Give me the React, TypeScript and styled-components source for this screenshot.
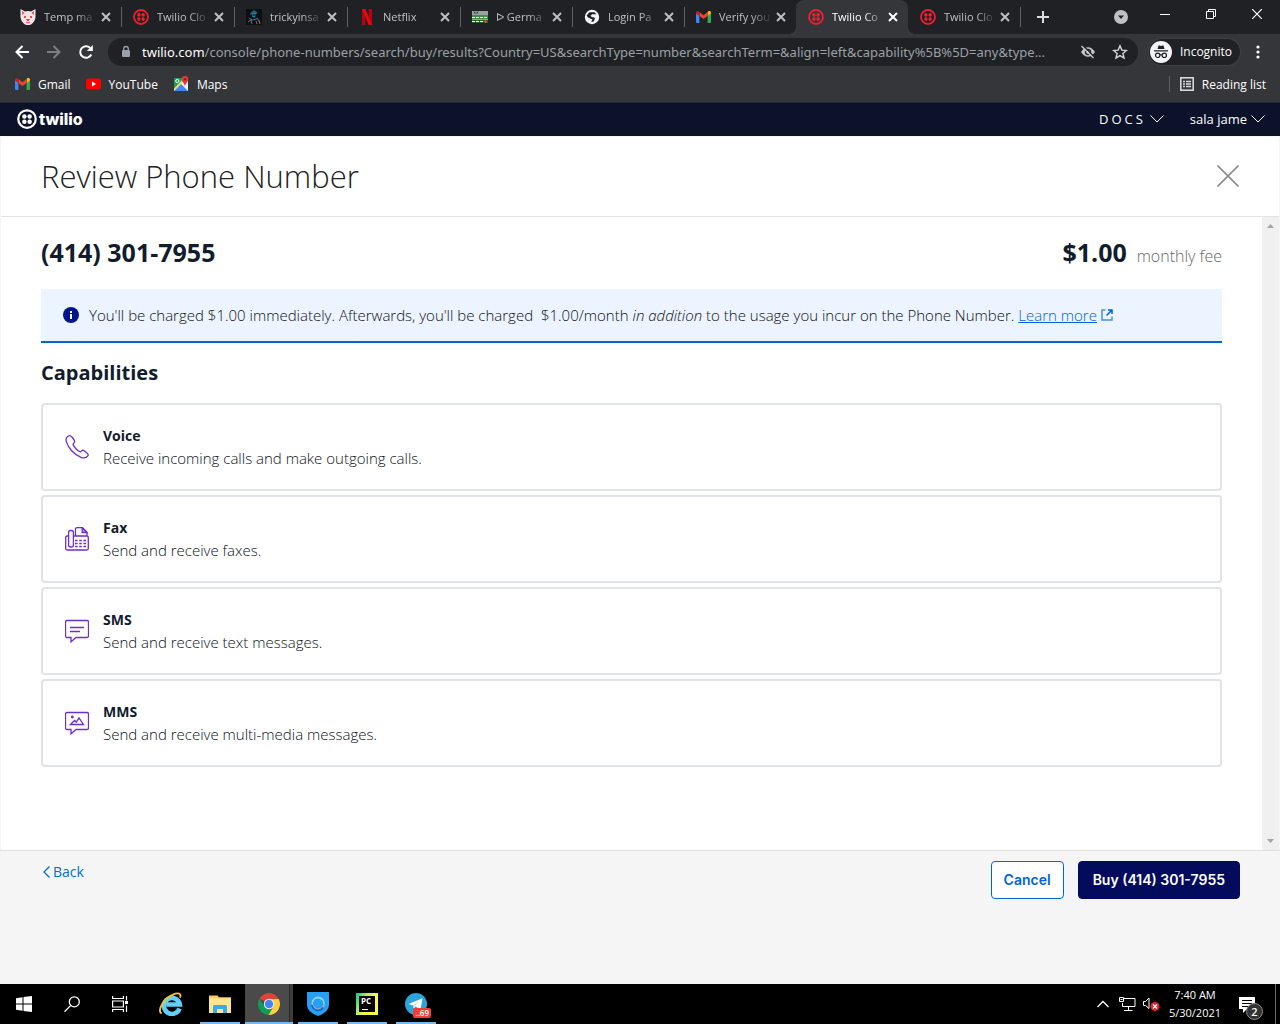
import React from "react";
import styled, { createGlobalStyle, css } from "styled-components";

const chromeFont = '"Open Sans", "Noto Sans", sans-serif';
const urlFont = '"Noto Sans", "Open Sans", sans-serif';

const GlobalStyle = createGlobalStyle`
  *, *::before, *::after { box-sizing: border-box; }
  body { margin: 0; font-family: "Open Sans", "Noto Sans", sans-serif; background: #f5f5f5; }
  button { font: inherit; border: 0; padding: 0; background: none; color: inherit; cursor: pointer; }
  h1, h2, h3, p { margin: 0; }
  svg { display: block; flex: none; }
  a { text-decoration: none; color: inherit; }
`;

/* ---------- frame ---------- */

const Screen = styled.div`
  display: flex;
  flex-direction: column;
  min-height: 100vh;
`;

const Chrome = styled.header`
  font-family: ${chromeFont};
  font-size: 12px;
  background: #35363a;
  color: #fff;
  border-bottom: 1px solid #29292d;
`;

const TabStrip = styled.div`
  display: flex;
  align-items: stretch;
  height: 34px;
  padding-left: 8px;
  background: #202124;
`;

const Tabs = styled.div`
  display: grid;
  grid-template-columns: repeat(4, 113px) repeat(5, 112px);
`;

const Tab = styled.div<{ $active?: boolean; $divider?: boolean }>`
  position: relative;
  display: flex;
  align-items: center;
  padding: 0 10px 0 12px;
  color: #bdc1c6;
  font-size: 11px;
  line-height: 16px;
  ${(p) =>
    p.$divider &&
    css`
      &::after {
        content: "";
        position: absolute;
        right: -1px;
        top: 7px;
        width: 1px;
        height: 20px;
        background: #5f6368;
      }
    `}
  ${(p) =>
    p.$active &&
    css`
      color: #fff;
      background: #35363a;
      border-radius: 8px 8px 0 0;
      &::before,
      &::after {
        content: "";
        position: absolute;
        bottom: 0;
        width: 8px;
        height: 8px;
      }
      &::before {
        left: -8px;
        background: radial-gradient(circle at 0 0, transparent 8px, #35363a 8px);
      }
      &::after {
        right: -8px;
        background: radial-gradient(circle at 100% 0, transparent 8px, #35363a 8px);
      }
    `}
`;

const TabTitle = styled.span`
  flex: 1;
  min-width: 0;
  margin: 0 3px 0 8px;
  white-space: nowrap;
  mask-image: linear-gradient(to right, #000 32px, transparent 53px);
`;

const IconButton = styled.button<{ $w?: number; $h?: number; $color?: string }>`
  display: flex;
  flex: none;
  align-items: center;
  justify-content: center;
  width: ${(p) => p.$w ?? 16}px;
  height: ${(p) => p.$h ?? 16}px;
  color: ${(p) => p.$color ?? "inherit"};
`;

const WindowControls = styled.div`
  display: flex;
  margin-left: auto;
`;

const NewTab = styled.div`
  display: flex;
  align-items: center;
  padding-left: 9px;
`;

const AddressRow = styled.div`
  display: flex;
  align-items: center;
  height: 35px;
  padding: 0 4px 0 6px;
`;

const Omnibox = styled.div`
  display: flex;
  flex: 1;
  align-items: center;
  min-width: 0;
  height: 28px;
  margin: 0 11px 0 6px;
  padding: 0 10px 0 12px;
  border-radius: 14px;
  background: #202124;
  font-family: ${urlFont};
  font-size: 13px;
`;

const HostLabel = styled.label`
  margin-left: 10px;
`;

const UrlInput = styled.input`
  flex: 1;
  min-width: 0;
  padding: 0;
  border: 0;
  outline: 0;
  background: none;
  color: #9aa0a6;
  font: inherit;
`;

const Incognito = styled.button`
  display: flex;
  align-items: center;
  gap: 8px;
  height: 26px;
  padding: 0 8px 0 1px;
  border-radius: 13px;
  background: #202124;
  box-shadow: 0 0 0 1px #3f4043;
`;

const Bookmarks = styled.nav`
  display: flex;
  align-items: center;
  gap: 15px;
  height: 30px;
  margin-bottom: 3px;
  padding: 0 14px 0 15px;
`;

const Bookmark = styled.a`
  display: flex;
  align-items: center;
  gap: 8px;
`;

const ReadingList = styled.button`
  display: flex;
  align-items: center;
  gap: 8px;
  height: 16px;
  margin-left: auto;
  padding-left: 10px;
  border-left: 1px solid #5f6368;
`;

/* ---------- twilio page ---------- */

const SiteHeader = styled.div`
  display: flex;
  align-items: center;
  height: 33px;
  padding: 0 15px 2px 17px;
  background: #0d122b;
  color: #fff;
  font-size: 13px;
`;

const Logo = styled.a`
  display: flex;
  align-items: center;
  gap: 2px;
  margin-right: auto;
  font: 800 16px/20px Inter, sans-serif;
`;

const MenuButton = styled.button<{ $spaced?: boolean }>`
  display: flex;
  align-items: center;
  gap: 4px;
  margin-left: 26px;
  letter-spacing: ${(p) => (p.$spaced ? "3px" : "normal")};
`;

const Dialog = styled.main`
  display: flex;
  flex: 1;
  flex-direction: column;
  border: solid #f5f5f5;
  border-width: 1px 1px 0;
  background: #fff;
  color: #121c2d;
`;

const DialogHeader = styled.div`
  display: flex;
  align-items: center;
  justify-content: space-between;
  height: 80px;
  padding: 0 40px 1px;
  border-bottom: 1px solid #e4e4e4;
`;

const Title = styled.h1`
  color: #222;
  font-size: 31px;
  font-weight: 300;
  line-height: 40px;
`;

const DialogBody = styled.div`
  display: flex;
  flex: 1;
`;

const Content = styled.div`
  flex: 1;
  min-width: 0;
  padding: 19px 40px;
`;

const ScrollTrack = styled.div`
  display: flex;
  flex-direction: column;
  align-items: center;
  justify-content: space-between;
  width: 17px;
  padding: 7px 0;
  background: #f0f0f0;
`;

const NumberRow = styled.div`
  display: flex;
  align-items: baseline;
  justify-content: space-between;
  height: 33px;
  margin-bottom: 20px;
  line-height: 32px;
`;

const Strong = styled.strong`
  font-size: 25px;
  font-weight: 700;
`;

const Fee = styled.span`
  margin-left: 10px;
  color: #666;
  font-size: 16px;
  font-weight: 300;
`;

const Notice = styled.div`
  display: flex;
  align-items: center;
  gap: 10px;
  min-height: 54px;
  padding: 0 22px;
  border-bottom: 2px solid #0263e0;
  background: #ebf4ff;
  color: #111;
  font-size: 15px;
  font-weight: 300;
`;

const LearnMore = styled.a`
  display: inline-flex;
  align-items: center;
  gap: 4px;
  color: #0263e0;
  span { text-decoration: underline; }
`;

const SectionTitle = styled.h2`
  margin: 16px 0;
  font-size: 20px;
  font-weight: 700;
  line-height: 28px;
`;

const CardList = styled.div`
  display: grid;
  gap: 4px;
`;

const Card = styled.article`
  display: flex;
  align-items: center;
  gap: 14px;
  height: 88px;
  padding: 0 22px;
  border: 2px solid #e1e3ea;
  border-radius: 4px;
  line-height: 22px;
`;

const CardTitle = styled.h3`
  font-size: 14px;
  font-weight: 700;
`;

const CardText = styled.p`
  color: #0b1220;
  font-size: 15px;
  font-weight: 300;
`;

const DialogFooter = styled.footer`
  display: flex;
  align-items: flex-start;
  min-height: 134px;
  margin: 0 -1px;
  padding: 10px 40px;
  border-top: 1px solid #e0e0e0;
  background: #f5f5f5;
  font-size: 14px;
`;

const Back = styled.button`
  display: flex;
  align-items: center;
  gap: 3px;
  margin-right: auto;
  padding-left: 3px;
  color: #0070cc;
  line-height: 22px;
`;

const ActionButton = styled.button<{ $primary?: boolean }>`
  height: 38px;
  margin-left: 14px;
  padding: 0 ${(p) => (p.$primary ? 14 : 12)}px;
  border: 1px solid ${(p) => (p.$primary ? "#030b5d" : "#0263e0")};
  border-radius: 4px;
  background: ${(p) => (p.$primary ? "#030b5d" : "#fff")};
  color: ${(p) => (p.$primary ? "#fff" : "#0263e0")};
  font: 600 14px/20px Inter, sans-serif;
`;

/* ---------- taskbar ---------- */

const Taskbar = styled.div`
  display: flex;
  height: 40px;
  background: #000;
  color: #fff;
  font-family: ${chromeFont};
  font-size: 12px;
`;

const TaskApps = styled.div`
  display: flex;
  gap: 1px;
  margin-left: 3px;
`;

const TaskButton = styled.button<{ $running?: boolean; $active?: boolean }>`
  display: flex;
  align-items: center;
  justify-content: center;
  width: 48px;
  height: 40px;
  ${(p) =>
    p.$running &&
    css`
      background: linear-gradient(#76b9ed, #76b9ed) bottom / 40px 2px no-repeat;
    `}
  ${(p) =>
    p.$active &&
    css`
      background: linear-gradient(#76b9ed, #76b9ed) bottom / 48px 2px no-repeat,
        linear-gradient(to right, #4a4a4a 44px, #262626 44px, #262626 45px, #3c3c3c 45px);
    `}
`;

const Tray = styled.div`
  display: flex;
  align-items: center;
  margin-left: auto;
`;

const Clock = styled.time`
  width: 64px;
  margin-right: 4px;
  text-align: center;
  font-size: 11px;
  line-height: 18px;
`;

const ShowDesktop = styled.button`
  width: 5px;
  height: 40px;
  margin-left: 12px;
  border-left: 1px solid #6b6b6b;
`;

/* ---------- drawings ---------- */

const TwilioIcon = ({ size = 16, color = "#f01f2c" }: { size?: number; color?: string }) => (
  <svg width={size} height={size} viewBox="0 0 16 16" aria-hidden="true">
    <circle cx="8" cy="8" r="7" fill="none" stroke={color} strokeWidth="1.8" />
    <g fill={color}>
      <circle cx="5.9" cy="5.9" r="1.8" />
      <circle cx="10.1" cy="5.9" r="1.8" />
      <circle cx="5.9" cy="10.1" r="1.8" />
      <circle cx="10.1" cy="10.1" r="1.8" />
    </g>
  </svg>
);

const CatIcon = () => (
  <svg width="16" height="16" viewBox="0 0 16 16" aria-hidden="true">
    <path d="M.5 0 L5 2.500 Q8 1.500 11 2.500 L15.500 0 L15.500 8 Q15 13 11 15.500 Q8 16.500 5 15.500 Q1 13 .5 8Z" fill="#f7e4e4" />
    <path d="M2 2 L4.500 4 L2.200 6ZM14 2 L11.500 4 L13.800 6Z" fill="#e2545c" />
    <circle cx="5" cy="8" r="1" fill="#c4232f" />
    <circle cx="11" cy="8" r="1" fill="#c4232f" />
    <path d="M6.500 10.500h3L8 12zM6 13q2 1.500 4 0" stroke="#e2343f" strokeWidth=".9" fill="none" />
  </svg>
);

const PortraitIcon = () => (
  <svg width="16" height="16" viewBox="0 0 16 16" aria-hidden="true">
    <path fill="#0c1014" d="M0 0h16v16H0z" />
    <path d="M5 3 L8 1 L11 3 L10 5 L6 5Z" fill="#1e5f78" />
    <path d="M6 5h4v3l-2 1-2-1z" fill="#173f50" />
    <path d="M4 5l7-1M6 7l3 1M3 9l3 2 5-1M2 13l4-3M11 9l3 5" stroke="#2b8ba1" strokeWidth="1" />
    <path d="M5 11l1 4M13 11l1 4M10 12l1 3" stroke="#a3633a" strokeWidth="1" />
  </svg>
);

const NetflixIcon = () => (
  <svg width="16" height="16" viewBox="0 0 16 16" aria-hidden="true">
    <path d="M3 0h3.400v16H3zM9.700 0H13v16H9.700z" fill="#b1060f" />
    <path d="M3 0h3.400L13 16H9.700z" fill="#e50914" />
  </svg>
);

const RoadIcon = () => (
  <svg width="16" height="12" viewBox="0 0 16 12" aria-hidden="true">
    <path fill="#9da19d" d="M0 0h16v12H0z" />
    <path fill="#3f8f46" d="M0 4h16v4H0z" />
    <path fill="#2c5a34" d="M0 9h16v3H0z" />
    <path d="M0 6.500h16M0 10.500h16" stroke="#fff" strokeDasharray="3 1" />
    <path d="M2 .5l1 2 1-1 1 1 1-2" stroke="#243b6b" fill="none" />
    <path d="M12 10.500h3M13.500 9v3" stroke="#f04b21" />
  </svg>
);

const GlobeIcon = () => (
  <svg width="16" height="16" viewBox="0 0 16 16" aria-hidden="true">
    <circle cx="8" cy="8" r="7.200" fill="#f1f3f4" />
    <path d="M5.500 3.200H10.500L12.500 5.200H8.200L6.500 6.800 8 8.200H10L11 9.600 9.500 12.800H7.200L8.500 10.600 4 8.600 2.600 6.500Z" fill="#202124" />
  </svg>
);

const GmailIcon = () => (
  <svg width="15" height="12" viewBox="0 0 15 12" aria-hidden="true">
    <path d="M0 2v9a1 1 0 0 0 1 1h2.400V4.500z" fill="#4285f4" />
    <path d="M15 2v9a1 1 0 0 1-1 1h-2.400V4.500z" fill="#34a853" />
    <path d="M11.600 1.300V5L15 2.600V1.800C15 .2 13.200-.4 12 .6z" fill="#fbbc04" />
    <path d="M3.400 5V1.100L7.500 4.200l4.100-3.100V5L7.500 8z" fill="#ea4335" />
    <path d="M0 1.800v.8L3.400 5V1.100L2.800.6C1.700-.3 0 .2 0 1.800z" fill="#c5221f" />
  </svg>
);

const YouTubeIcon = () => (
  <svg width="15" height="12" viewBox="0 0 15 12" aria-hidden="true">
    <rect y=".5" width="15" height="11" rx="2.500" fill="#f00" />
    <path d="M6 3.500v5L10 6z" fill="#fff" />
  </svg>
);

const MapsIcon = () => (
  <svg width="16" height="16" viewBox="0 0 16 16" aria-hidden="true">
    <path d="M1 2h14v13H1z" fill="#e8eaed" />
    <path d="M1 2h10L1 13z" fill="#1e9b57" />
    <path d="M1 15L8 8l7 7z" fill="#4285f4" />
    <path d="M1 12.500L11.500 2h2L1 14.500z" fill="#fdd835" />
    <path d="M9 8l6 6V8z" fill="#f1f3f4" />
    <circle cx="4.300" cy="5" r="1.600" fill="none" stroke="#fff" strokeWidth="1" />
    <path d="M12 0a3.300 3.300 0 0 1 3.300 3.300C15.300 6 12.500 7 12 10.500 11.500 7 8.700 6 8.700 3.300A3.300 3.300 0 0 1 12 0z" fill="#e53935" />
    <circle cx="12" cy="3.300" r="1.200" fill="#8e1b1b" />
  </svg>
);

type StrokeProps = { w: number; h: number; d: string; width?: number };
const Stroke = ({ w, h, d, width = 1 }: StrokeProps) => (
  <svg width={w} height={h} viewBox={`0 0 ${w} ${h}`} fill="none" stroke="currentColor" strokeWidth={width} aria-hidden="true">
    <path d={d} />
  </svg>
);

const ReloadIcon = () => (
  <svg width="16" height="16" viewBox="0 0 16 16" aria-hidden="true">
    <path d="M13.300 10.500A5.800 5.800 0 1 1 12.200 4" fill="none" stroke="#fff" strokeWidth="2" />
    <path d="M14.800 1v6H8.800z" fill="#fff" />
  </svg>
);

const LockIcon = () => (
  <svg width="12" height="14" viewBox="0 0 12 14" aria-hidden="true">
    <rect x="2" y="5" width="8" height="7" rx="1" fill="#9aa0a6" />
    <path d="M3.700 5.500V3.800a2.300 2.300 0 0 1 4.600 0v1.700" fill="none" stroke="#9aa0a6" strokeWidth="1.300" />
  </svg>
);

const EyeOffIcon = () => (
  <svg width="16" height="16" viewBox="0 0 16 16" aria-hidden="true">
    <path d="M1 8Q4 3.200 8 3.200T15 8Q12 12.800 8 12.800T1 8Z" fill="#c4c7ca" />
    <circle cx="8" cy="8" r="3.200" fill="#202124" />
    <circle cx="8" cy="8" r="1.900" fill="#c4c7ca" />
    <path d="M2.500 1L15 13.500" stroke="#202124" strokeWidth="1.500" />
    <path d="M1.500 2L13.500 14" stroke="#c4c7ca" strokeWidth="1.500" />
  </svg>
);

const StarIcon = () => (
  <svg width="16" height="16" viewBox="0 0 16 16" aria-hidden="true">
    <path d="M8 1.800l1.800 4.300 4.600.4-3.500 3 1.100 4.500L8 11.600 4 14l1.100-4.500-3.500-3 4.600-.4z" fill="none" stroke="#d5d7da" strokeWidth="1.400" />
  </svg>
);

const SpyIcon = () => (
  <svg width="22" height="22" viewBox="0 0 22 22" aria-hidden="true">
    <circle cx="11" cy="11" r="11" fill="#f1f3f4" />
    <path d="M7.500 8l1-3.500h1.200L11 5l1.300-.5h1.200l1 3.500zM4 9.200h14v1.300H4z" fill="#202124" />
    <g fill="none" stroke="#202124" strokeWidth="1.200">
      <circle cx="7.700" cy="14.300" r="2.200" />
      <circle cx="14.300" cy="14.300" r="2.200" />
      <path d="M9.900 14q1.100-.8 2.200 0" />
    </g>
  </svg>
);

const ListIcon = () => (
  <svg width="14" height="14" viewBox="0 0 14 14" aria-hidden="true">
    <rect x=".8" y=".8" width="12.400" height="12.400" fill="none" stroke="#d5d7da" strokeWidth="1.600" />
    <path d="M3 4.500h2M6 4.500h5M3 7h2M6 7h5M3 9.500h2M6 9.500h5" stroke="#d5d7da" strokeWidth="1.500" />
  </svg>
);

const InfoIcon = () => (
  <svg width="16" height="16" viewBox="0 0 16 16" aria-hidden="true">
    <circle cx="8" cy="8" r="8" fill="#001489" />
    <path d="M7 4h2v2H7zM7 7h2v5H7z" fill="#fff" />
  </svg>
);

const purple = "#6d2ed1";

const PhoneIcon = () => (
  <svg width="24" height="24" viewBox="0 0 24 24" aria-hidden="true">
    <path d="M3 1.300C1.300 2.400.7 4.600 1.300 6.600 3.200 13 9.500 20 16 22.300c2.600.9 5.500.5 6.800-1.500.6-1 .3-2-.6-2.600l-3-2.400c-.9-.7-2-.7-2.700.1l-1.200 1c-2.800-1-6.500-5-7.300-7.600L9.100 7.600c.7-.8.7-1.700.1-2.600L6.900 2C6 .800 4.200.500 3 1.300z" fill="none" stroke={purple} strokeWidth="1.300" />
  </svg>
);

const FaxIcon = () => (
  <svg width="24" height="24" viewBox="0 0 24 24" fill="none" stroke={purple} strokeWidth="1.300" aria-hidden="true">
    <path d="M3 9H2Q.7 9 .7 10.500v11Q.7 23 2.200 23h19.600q1.500 0 1.500-1.500v-11q0-1.500-1.500-1.500H9" />
    <rect x="3.600" y="3.500" width="4.800" height="16.500" rx="2" />
    <path d="M10.500 9V2Q10.500.7 12 .7h5.500L22 5.200V9" />
    <path d="M17.200.9V5.500h4.600z" fill={purple} fillOpacity=".35" />
    <path d="M10 13.500h11.500M10 16.500h11.500M10 19.500h11.500" strokeWidth="1.600" strokeDasharray="2.600 1.600" />
  </svg>
);

const bubble = "M2 1.500h20q1.500 0 1.500 1.500v14q0 1.500-1.500 1.500H11l-5 4.300v-4.300H2Q.5 18.500.5 17V3Q.5 1.500 2 1.500z";

const SmsIcon = () => (
  <svg width="24" height="24" viewBox="0 0 24 24" fill="none" stroke={purple} strokeWidth="1.300" aria-hidden="true">
    <path d={bubble} />
    <path d="M5 8.500h14M5 12.500h10" />
  </svg>
);

const MmsIcon = () => (
  <svg width="24" height="24" viewBox="0 0 24 24" fill="none" stroke={purple} strokeWidth="1.300" aria-hidden="true">
    <path d={bubble} />
    <path d="M5.500 13.500L9.500 9.500l1.800 1.700L14 7l4.500 6.500z" />
    <circle cx="7.300" cy="6" r=".8" fill={purple} />
  </svg>
);

const ExternalIcon = () => (
  <svg width="12" height="12" viewBox="0 0 12 12" fill="none" stroke="#4a90ea" strokeWidth="1.500" aria-hidden="true">
    <path d="M4.500 1H1v10h10V7.500" />
    <path d="M7 1h4v4M11 1L5.500 6.500" stroke="#0263e0" />
  </svg>
);

const WindowsIcon = () => (
  <svg width="16" height="16" viewBox="0 0 16 16" fill="#fff" aria-hidden="true">
    <path d="M0 2.200L6.500 1.300V7.500H0zM7.500 1.100L16 0v7.500H7.500zM0 8.500h6.500v6.200L0 13.800zM7.500 8.500H16V16l-8.500-1.100z" />
  </svg>
);

const TaskViewIcon = () => (
  <svg width="18" height="16" viewBox="0 0 18 16" fill="none" stroke="#fff" strokeWidth="1.200" aria-hidden="true">
    <path d="M1.600 0v2.500h10.800V0M1.600 16v-2.500h10.800V16M1.600 5h10.800v6H1.600zM15.500 0v4.500M15.500 9.500V16" />
    <path d="M14 5h3v3h-3z" fill="#fff" stroke="none" />
  </svg>
);

const IeIcon = () => (
  <svg width="24" height="24" viewBox="0 0 24 24" fill="none" aria-hidden="true">
    <path d="M20.500 16.500A8 8 0 1 1 20.800 12.500H7.500" stroke="#5fd0f8" strokeWidth="4.600" />
    <path d="M2.600 21.500C-2.500 18.500 5 6.500 14 2.600 19 .3 22.700 1.200 21 5.600" stroke="#f6c32c" strokeWidth="1.900" />
  </svg>
);

const FolderIcon = () => (
  <svg width="22" height="20" viewBox="0 0 22 20" aria-hidden="true">
    <path d="M0 1.500h8.500L10 3.300h12V19H0z" fill="#f5cf62" />
    <path d="M1.500 4.500H22V19H0V5z" fill="#ffe590" />
    <path d="M4 19v-6.500q0-1.500 1.500-1.500h11q1.500 0 1.500 1.500V19h-4v-4H8v4z" fill="#37ace4" />
  </svg>
);

const ChromeIcon = () => (
  <svg width="24" height="24" viewBox="0 0 24 24" aria-hidden="true">
    <path d="M12 12L2.500 6.500A11 11 0 0 1 21.500 6.500L22 7H12z" fill="#db4437" />
    <path d="M12 12l4.500 2.500L11.500 23A11 11 0 0 1 2.500 6.500L7.500 14.500z" fill="#0f9d58" />
    <path d="M12 7h9.800A11 11 0 0 1 11.500 23L16.500 14.500z" fill="#ffcd40" />
    <circle cx="12" cy="12" r="5.200" fill="#f1f1f1" />
    <circle cx="12" cy="12" r="4.200" fill="#4285f4" />
  </svg>
);

const ShieldIcon = () => (
  <svg width="22" height="24" viewBox="0 0 22 24" aria-hidden="true">
    <path d="M0 0H22V13q0 7-11 11Q0 20 0 13z" fill="#279ff5" />
    <path d="M16 7.500A6 6 0 1 0 17 13" fill="none" stroke="#c9b3b8" strokeWidth="1.300" />
    <path d="M5.500 9.500A6 6 0 0 1 17 12.500" fill="none" stroke="#7fdcf8" strokeWidth="1.600" />
    <path d="M5 13a6 6 0 0 0 11 2.500" fill="none" stroke="#1267c8" strokeWidth="1.800" />
  </svg>
);

const PycharmBox = styled.span`
  display: flex;
  width: 22px;
  height: 22px;
  padding: 3px;
  background: linear-gradient(120deg, #21d789 10%, #b7ee5a 35%, #fcf84a 60%);
`;

const PycharmFace = styled.span`
  width: 16px;
  height: 16px;
  padding-left: 2px;
  background: linear-gradient(#fff, #fff) 3px 13px / 6px 1px no-repeat, #000;
  font-size: 8px;
  font-weight: 700;
  line-height: 10px;
  text-align: left;
`;

const Badged = styled.span`
  position: relative;
  display: block;
`;

const RedBadge = styled.span`
  position: absolute;
  right: -4px;
  bottom: -3px;
  padding: 0 2px;
  border-radius: 2px;
  background: #f23c34;
  font-size: 8px;
  font-weight: 600;
  line-height: 10px;
`;

const CountBadge = styled.span`
  position: absolute;
  left: 7px;
  top: 7px;
  width: 17px;
  height: 17px;
  border: 1px solid #8a8a8a;
  border-radius: 50%;
  background: #333;
  font-size: 11px;
  font-weight: 600;
  line-height: 15px;
`;

const TelegramIcon = () => (
  <svg width="22" height="22" viewBox="0 0 22 22" aria-hidden="true">
    <circle cx="11" cy="11" r="11" fill="#2ca5dc" />
    <path d="M3.500 11L17.500 5.200 15.500 16.500 10.500 13.500 8.500 15.500 8 12.500z" fill="#fff" />
    <path d="M8 12.500L15 7.500 9.200 13.200 8.500 15.500z" fill="#b5d4e6" />
  </svg>
);

const NetworkIcon = () => (
  <svg width="17" height="15" viewBox="0 0 17 15" fill="none" stroke="#fff" aria-hidden="true">
    <path d="M5 1.500h11v8H3.500V6M9.500 9.500v4M5 13.500h8.500M.5.500h4v4h-4zM1.500 2.500h2" />
  </svg>
);

const SpeakerIcon = () => (
  <svg width="17" height="16" viewBox="0 0 17 16" aria-hidden="true">
    <path d="M.5 5.500h2L6 2v10.500L2.500 9.500h-2z" fill="none" stroke="#fff" />
    <circle cx="12" cy="10.500" r="4.500" fill="#e3232f" />
    <path d="M10 8.500l4 4M14 8.500l-4 4" stroke="#fff" strokeWidth="1.200" />
  </svg>
);

const NoteIcon = () => (
  <svg width="16" height="17" viewBox="0 0 16 17" aria-hidden="true">
    <path d="M0 1h16v12H8l-4 4v-4H0z" fill="#fff" />
    <path d="M3 4.500h10M3 7.500h10M3 10.500h7" stroke="#000" />
  </svg>
);

/* ---------- data ---------- */

const tabs = [
  { title: "Temp ma", icon: <CatIcon /> },
  { title: "Twilio Clo", icon: <TwilioIcon /> },
  { title: "trickyinsa", icon: <PortraitIcon /> },
  { title: "Netflix", icon: <NetflixIcon /> },
  { title: "ᐅ Germa", icon: <RoadIcon /> },
  { title: "Login Pa", icon: <GlobeIcon /> },
  { title: "Verify you", icon: <GmailIcon /> },
  { title: "Twilio Co", icon: <TwilioIcon />, active: true },
  { title: "Twilio Clo", icon: <TwilioIcon /> },
];

const bookmarks = [
  { label: "Gmail", icon: <GmailIcon /> },
  { label: "YouTube", icon: <YouTubeIcon /> },
  { label: "Maps", icon: <MapsIcon /> },
];

const capabilities = [
  { name: "Voice", text: "Receive incoming calls and make outgoing calls.", icon: <PhoneIcon /> },
  { name: "Fax", text: "Send and receive faxes.", icon: <FaxIcon /> },
  { name: "SMS", text: "Send and receive text messages.", icon: <SmsIcon /> },
  { name: "MMS", text: "Send and receive multi-media messages.", icon: <MmsIcon /> },
];

const path =
  "/console/phone-numbers/search/buy/results?Country=US&searchType=number&searchTerm=&align=left&capability%5B%5D=any&type...";

function BrowserChrome() {
  return (
    <Chrome>
      <TabStrip>
        <Tabs>
          {tabs.map((tab, i) => (
            <Tab key={i} $active={tab.active} $divider={!tab.active && !tabs[i + 1]?.active}>
              {tab.icon}
              <TabTitle>{tab.title}</TabTitle>
              <IconButton aria-label="Close tab" $w={10}>
                <Stroke w={10} h={10} width={2} d="M1 1L9 9M9 1L1 9" />
              </IconButton>
            </Tab>
          ))}
        </Tabs>
        <NewTab>
          <IconButton aria-label="New tab" $w={28} $h={28} $color="#dadce0">
            <Stroke w={12} h={12} width={2} d="M6 0V12M0 6H12" />
          </IconButton>
        </NewTab>
        <WindowControls>
          <IconButton aria-label="Search tabs" $w={42} $h={34}>
            <svg width="14" height="14" viewBox="0 0 14 14" aria-hidden="true">
              <circle cx="7" cy="7" r="7" fill="#bdc1c6" />
              <path d="M4 5.500h6L7 9z" fill="#202124" />
            </svg>
          </IconButton>
          <IconButton aria-label="Minimize" $w={46} $h={28}>
            <Stroke w={10} h={10} d="M0 5.500H10" />
          </IconButton>
          <IconButton aria-label="Restore" $w={46} $h={28}>
            <Stroke w={10} h={10} d="M.5 2.500h7v7h-7zM2.500 2.500v-2h7v7h-2" />
          </IconButton>
          <IconButton aria-label="Close window" $w={46} $h={28}>
            <Stroke w={10} h={10} width={1.2} d="M0 0L10 10M10 0L0 10" />
          </IconButton>
        </WindowControls>
      </TabStrip>
      <AddressRow>
        <IconButton aria-label="Back" $w={32} $h={28}>
          <Stroke w={14} h={14} width={2} d="M14 7H1.500M7.500 1L1.500 7L7.500 13" />
        </IconButton>
        <IconButton aria-label="Forward" $w={32} $h={28} $color="#7d7e80">
          <Stroke w={14} h={14} width={2} d="M0 7H12.500M6.500 1L12.500 7L6.500 13" />
        </IconButton>
        <IconButton aria-label="Reload" $w={32} $h={28}>
          <ReloadIcon />
        </IconButton>
        <Omnibox>
          <LockIcon />
          <HostLabel htmlFor="url">twilio.com</HostLabel>
          <UrlInput id="url" defaultValue={path} />
          <IconButton aria-label="Third-party cookies blocked" $w={48} $h={28}>
            <EyeOffIcon />
          </IconButton>
          <IconButton aria-label="Bookmark this tab">
            <StarIcon />
          </IconButton>
        </Omnibox>
        <Incognito>
          <SpyIcon />
          Incognito
        </Incognito>
        <IconButton aria-label="Menu" $w={36} $h={28}>
          <svg width="4" height="14" viewBox="0 0 4 14" fill="#fff" aria-hidden="true">
            <circle cx="2" cy="2" r="1.600" />
            <circle cx="2" cy="7" r="1.600" />
            <circle cx="2" cy="12" r="1.600" />
          </svg>
        </IconButton>
      </AddressRow>
      <Bookmarks aria-label="Bookmarks">
        {bookmarks.map((b) => (
          <Bookmark key={b.label} href="#">
            {b.icon}
            {b.label}
          </Bookmark>
        ))}
        <ReadingList>
          <ListIcon />
          Reading list
        </ReadingList>
      </Bookmarks>
    </Chrome>
  );
}

function Review() {
  const caret = <Stroke w={14} h={8} d="M.5 .5L7 7L13.500 .5" />;
  return (
    <>
      <SiteHeader>
        <Logo href="#">
          <TwilioIcon size={20} color="#fff" />
          twilio
        </Logo>
        <MenuButton $spaced>DOCS{caret}</MenuButton>
        <MenuButton>sala jame{caret}</MenuButton>
      </SiteHeader>
      <Dialog>
        <DialogHeader>
          <Title>Review Phone Number</Title>
          <IconButton aria-label="Close" $w={22} $h={24} $color="#8c8c8c">
            <Stroke w={22} h={22} width={1.6} d="M.5 .5L21.500 21.500M21.500 .5L.5 21.500" />
          </IconButton>
        </DialogHeader>
        <DialogBody>
          <Content>
            <NumberRow>
              <Strong>(414) 301-7955</Strong>
              <span>
                <Strong>$1.00</Strong>
                <Fee>monthly fee</Fee>
              </span>
            </NumberRow>
            <Notice>
              <InfoIcon />
              <p>
                You'll be charged $1.00 immediately. Afterwards, you'll be charged &nbsp;$1.00/month{" "}
                <em>in addition</em> to the usage you incur on the Phone Number.{" "}
                <LearnMore href="#">
                  <span>Learn more</span>
                  <ExternalIcon />
                </LearnMore>
              </p>
            </Notice>
            <SectionTitle>Capabilities</SectionTitle>
            <CardList>
              {capabilities.map((c) => (
                <Card key={c.name}>
                  {c.icon}
                  <div>
                    <CardTitle>{c.name}</CardTitle>
                    <CardText>{c.text}</CardText>
                  </div>
                </Card>
              ))}
            </CardList>
          </Content>
          <ScrollTrack aria-hidden="true">
            <svg width="7" height="4" viewBox="0 0 7 4" fill="#a3a3a3"><path d="M3.500 0L7 4H0z" /></svg>
            <svg width="7" height="4" viewBox="0 0 7 4" fill="#a3a3a3"><path d="M0 0h7L3.500 4z" /></svg>
          </ScrollTrack>
        </DialogBody>
        <DialogFooter>
          <Back>
            <Stroke w={7} h={12} width={1.3} d="M6.500 .5L1 6L6.500 11.500" />
            Back
          </Back>
          <ActionButton>Cancel</ActionButton>
          <ActionButton $primary>Buy (414) 301-7955</ActionButton>
        </DialogFooter>
      </Dialog>
    </>
  );
}

function WindowsTaskbar() {
  return (
    <Taskbar>
      <TaskButton aria-label="Start"><WindowsIcon /></TaskButton>
      <TaskButton aria-label="Search">
        <Stroke w={16} h={16} width={1.3} d="M15.300 5.800a5 5 0 1 1-10 0a5 5 0 1 1 10 0M6.800 9.400L.5 15.700" />
      </TaskButton>
      <TaskButton aria-label="Task view"><TaskViewIcon /></TaskButton>
      <TaskApps>
        <TaskButton aria-label="Internet Explorer"><IeIcon /></TaskButton>
        <TaskButton aria-label="File Explorer" $running><FolderIcon /></TaskButton>
        <TaskButton aria-label="Chrome" $running $active><ChromeIcon /></TaskButton>
        <TaskButton aria-label="Hotspot Shield" $running><ShieldIcon /></TaskButton>
        <TaskButton aria-label="PyCharm" $running>
          <PycharmBox><PycharmFace>PC</PycharmFace></PycharmBox>
        </TaskButton>
        <TaskButton aria-label="Telegram" $running>
          <Badged>
            <TelegramIcon />
            <RedBadge>..69</RedBadge>
          </Badged>
        </TaskButton>
      </TaskApps>
      <Tray>
        <IconButton aria-label="Show hidden icons" $w={24} $h={40}>
          <Stroke w={12} h={8} width={1.300} d="M.5 7L6 1.500L11.500 7" />
        </IconButton>
        <IconButton aria-label="Network" $w={24} $h={40}><NetworkIcon /></IconButton>
        <IconButton aria-label="Volume" $w={24} $h={40}><SpeakerIcon /></IconButton>
        <Clock>
          7:40 AM
          <br />
          5/30/2021
        </Clock>
        <IconButton aria-label="Notifications" $w={32} $h={40}>
          <Badged>
            <NoteIcon />
            <CountBadge>2</CountBadge>
          </Badged>
        </IconButton>
        <ShowDesktop aria-label="Show desktop" />
      </Tray>
    </Taskbar>
  );
}

export default function App() {
  return (
    <Screen>
      <GlobalStyle />
      <BrowserChrome />
      <Review />
      <WindowsTaskbar />
    </Screen>
  );
}
